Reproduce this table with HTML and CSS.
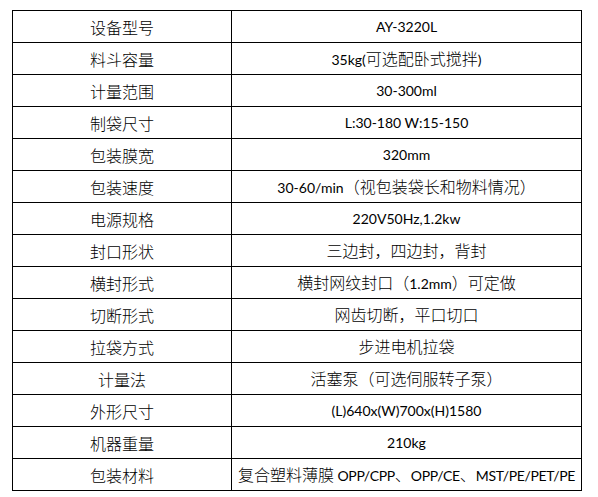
FILE: index.html
```html
<!DOCTYPE html>
<html lang="zh-CN">
<head>
<meta charset="utf-8">
<title>设备参数</title>
<link rel="stylesheet" href="styles.css">
</head>
<body>
<table class="spec">
  <colgroup><col class="c1"><col class="c2"></colgroup>
  <tbody>
    <tr><td class="k">设备型号</td><td>AY-3220L</td></tr>
    <tr><td class="k">料斗容量</td><td>35kg(<span class="zh">可选配卧式搅拌</span>)</td></tr>
    <tr><td class="k">计量范围</td><td>30-300ml</td></tr>
    <tr><td class="k">制袋尺寸</td><td>L:30-180 W:15-150</td></tr>
    <tr><td class="k">包装膜宽</td><td>320mm</td></tr>
    <tr><td class="k">包装速度</td><td>30-60/min<span class="zh">（视包装袋长和物料情况）</span></td></tr>
    <tr><td class="k">电源规格</td><td>220V50Hz,1.2kw</td></tr>
    <tr><td class="k">封口形状</td><td><span class="zh">三边封，四边封，背封</span></td></tr>
    <tr><td class="k">横封形式</td><td><span class="zh">横封网纹封口（</span>1.2mm<span class="zh">）可定做</span></td></tr>
    <tr><td class="k">切断形式</td><td><span class="zh">网齿切断，平口切口</span></td></tr>
    <tr><td class="k">拉袋方式</td><td><span class="zh">步进电机拉袋</span></td></tr>
    <tr><td class="k">计量法</td><td><span class="zh">活塞泵（可选伺服转子泵）</span></td></tr>
    <tr><td class="k">外形尺寸</td><td>(L)640x(W)700x(H)1580</td></tr>
    <tr><td class="k">机器重量</td><td>210kg</td></tr>
    <tr><td class="k">包装材料</td><td class="tight"><span class="zh">复合塑料薄膜 </span>OPP/CPP<span class="zh">、</span>OPP/CE<span class="zh">、</span>MST/PE/PET/PE</td></tr>
  </tbody>
</table>
</body>
</html>
```
FILE: styles.css
```css
html, body {
  margin: 0;
  padding: 0;
  background: #ffffff;
}
body {
  padding: 10px 0 0 12px;
}
.spec {
  border-collapse: collapse;
  table-layout: fixed;
  width: 569px;
  font-family: "Lato", "Noto Sans CJK SC", sans-serif;
  font-size: 14px;
  color: #000;
}
.c1 { width: 219px; }
.c2 { width: 350px; }
.spec tr {
  height: 32px;
}
.spec td {
  border: 1px solid #000;
  padding: 0;
  text-align: center;
  vertical-align: middle;
  white-space: nowrap;
  line-height: 20px;
}
.spec td.k {
  font-family: "Noto Sans CJK SC", sans-serif;
  font-size: 16px;
  font-weight: 300;
}
.spec td.tight {
  letter-spacing: -0.35px;
}
.zh {
  font-family: "Noto Sans CJK SC", sans-serif;
  font-size: 16px;
  font-weight: 300;
  letter-spacing: 0;
}
```
